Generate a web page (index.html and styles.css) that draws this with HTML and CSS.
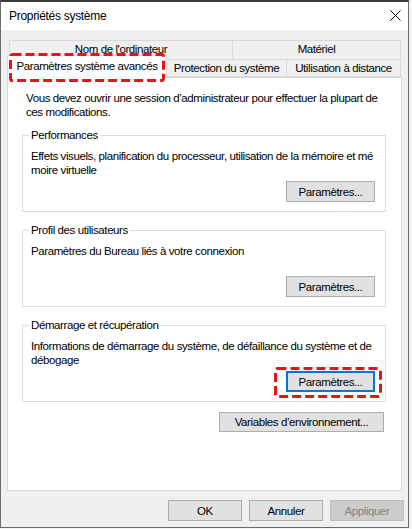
FILE: index.html
```html
<!DOCTYPE html>
<html lang="fr">
<head>
<meta charset="utf-8">
<title>Propriétés système</title>
<link rel="stylesheet" href="styles.css">
</head>
<body>
<div class="window">
  <div class="titlebar">
    <span class="title">Propriétés système</span>
    <svg class="close" width="11" height="11" viewBox="0 0 11 11"><path d="M0.5 0.5L10.5 10.5M10.5 0.5L0.5 10.5" stroke="#000" stroke-width="1"/></svg>
  </div>
  <div class="body">
    <div class="tabs">
      <div class="tabrow tabrow-top">
        <div class="tab tab-name">Nom de l'ordinateur</div>
        <div class="tab tab-hw">Matériel</div>
      </div>
      <div class="tabrow tabrow-bottom">
        <div class="tab tab-adv selected">Paramètres système avancés</div>
        <div class="tab tab-prot">Protection du système</div>
        <div class="tab tab-remote">Utilisation à distance</div>
      </div>
    </div>
    <div class="panel">
      <p class="intro">Vous devez ouvrir une session d’administrateur pour effectuer la plupart de<br>ces modifications.</p>
      <fieldset class="group">
        <legend>Performances</legend>
        <div class="gbody">
          <p class="gtext">Effets visuels, planification du processeur, utilisation de la mémoire et mé<br>moire virtuelle</p>
          <button class="btn btn-settings">Paramètres...</button>
        </div>
      </fieldset>
      <fieldset class="group">
        <legend>Profil des utilisateurs</legend>
        <div class="gbody">
          <p class="gtext">Paramètres du Bureau liés à votre connexion</p>
          <button class="btn btn-settings">Paramètres...</button>
        </div>
      </fieldset>
      <fieldset class="group">
        <legend>Démarrage et récupération</legend>
        <div class="gbody">
          <p class="gtext">Informations de démarrage du système, de défaillance du système et de<br>débogage</p>
          <button class="btn btn-settings focused">Paramètres...</button>
        </div>
      </fieldset>
      <div class="envrow">
        <button class="btn btn-env">Variables d’environnement...</button>
      </div>
    </div>
    <div class="actions">
      <button class="btn btn-action">OK</button>
      <button class="btn btn-action">Annuler</button>
      <button class="btn btn-action disabled">Appliquer</button>
    </div>
  </div>
  <svg class="mark mark-tab" width="158" height="30" viewBox="0 0 158 30"><rect x="1.5" y="1.5" width="153" height="26" rx="2" fill="none" stroke="#e3141b" stroke-width="3" stroke-dasharray="9 4"/></svg>
  <svg class="mark mark-btn" width="110" height="32" viewBox="0 0 110 32"><rect x="1.5" y="1.5" width="105" height="28" rx="2" fill="none" stroke="#e3141b" stroke-width="3" stroke-dasharray="9 4"/></svg>
</div>
</body>
</html>
```

FILE: styles.css
```css
* { box-sizing: border-box; }
html, body { margin: 0; padding: 0; background: #f3f3f3; }
body {
  font-family: "Liberation Sans", Arial, sans-serif;
  font-size: 11.5px;
  letter-spacing: -0.4px;
  color: #000;
}
.window {
  position: relative;
  width: 409px;
  height: 528px;
  border: 1px solid #6b6b6b;
  border-top: 2px solid #3a3a3a;
  background: #f0f0f0;
}
.titlebar {
  height: 28px;
  background: #fff;
  display: flex;
  align-items: center;
  justify-content: space-between;
  padding: 0 7px 1px 8px;
}
.title { font-size: 12px; letter-spacing: -0.3px; }
.body { padding: 10px 0 0 6px; }
.tabs { width: 395px; }
.tabrow { display: flex; }
.tabrow-top { padding-left: 2px; }
.tabrow-bottom { align-items: flex-end; margin-top: -3px; position: relative; z-index: 2; }
.tab {
  height: 18px;
  line-height: 16px;
  text-align: center;
  border: 1px solid #d9d9d9;
  background: #f0f0f0;
  white-space: nowrap;
}
.tabrow-top .tab { border-bottom: none; }
.tab + .tab { border-left: none; }
.tab-name { width: 224px; }
.tab-hw { width: 168px; }
.tab-adv { width: 160px; }
.tab-prot { width: 120px; }
.tab-remote { width: 114px; }
.tab.selected {
  height: 23px;
  line-height: 21px;
  background: #fff;
  border-bottom: none;
  margin-bottom: -1px;
}
.panel {
  width: 395px;
  height: 414px;
  background: #fff;
  border: 1px solid #d9d9d9;
  padding: 13px 15px 0 14px;
  position: relative;
  z-index: 1;
}
.intro {
  margin: 0 0 9px 4px;
  line-height: 14px;
  white-space: nowrap;
}
.group {
  margin: 0 0 11px 0;
  padding: 7px 10px 9px 8px;
  border: 1px solid #dcdcdc;
  min-width: 0;
}
.group legend {
  padding: 0 2px;
  margin-left: -2px;
  line-height: 14px;
}
.gbody {
  height: 53px;
  display: flex;
  flex-direction: column;
}
.gtext { margin: 0; line-height: 14px; white-space: nowrap; }
.btn {
  font-family: inherit;
  font-size: 11.5px;
  letter-spacing: -0.4px;
  color: #000;
  background: #e1e1e1;
  border: 1px solid #adadad;
  border-radius: 0;
  padding: 0;
  margin: 0;
  height: 21px;
}
.btn-settings {
  width: 89px;
  margin-top: auto;
  align-self: flex-end;
}
.btn.focused { border: 2px solid #0078d7; }
.envrow {
  display: flex;
  justify-content: flex-end;
  padding-right: 2px;
  margin-top: -1px;
}
.btn-env { width: 165px; height: 20px; }
.actions {
  display: flex;
  justify-content: flex-end;
  gap: 7px;
  width: 397px;
  margin-top: 9px;
}
.btn-action { width: 74px; }
.btn.disabled {
  background: #cccccc;
  border-color: #bfbfbf;
  color: #838383;
}
.mark { position: absolute; z-index: 5; }
.mark-tab { left: 8px; top: 51px; }
.mark-btn { left: 273px; top: 365px; }
```
